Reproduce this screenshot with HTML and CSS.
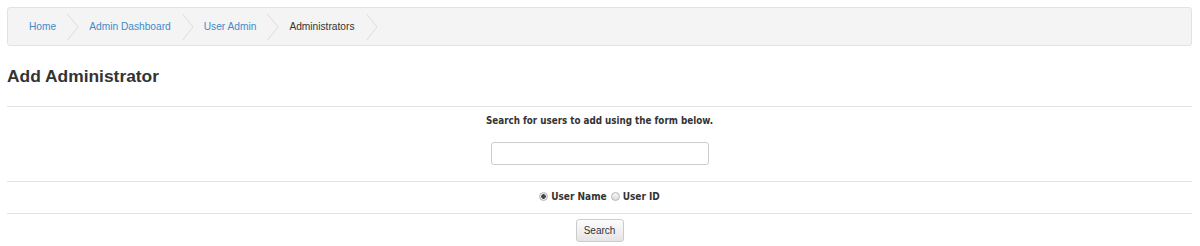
FILE: index.html
```html
<!DOCTYPE html>
<html lang="en">
    <head>
        <meta charset="UTF-8">
        <title>Add Administrator</title>
        <link rel="stylesheet" href="styles.css">
    </head>
    <body>
        <nav class="crumbs">
            <a href="#">Home</a>
            <svg class="sep" width="12" height="26" viewBox="0 0 12 26"><polyline points="0.5,0 11,13 0.5,26" fill="none" stroke="#dcdcdc" stroke-width="1"/></svg>
            <a href="#">Admin Dashboard</a>
            <svg class="sep" width="12" height="26" viewBox="0 0 12 26"><polyline points="0.5,0 11,13 0.5,26" fill="none" stroke="#dcdcdc" stroke-width="1"/></svg>
            <a href="#">User Admin</a>
            <svg class="sep" width="12" height="26" viewBox="0 0 12 26"><polyline points="0.5,0 11,13 0.5,26" fill="none" stroke="#dcdcdc" stroke-width="1"/></svg>
            <span class="current">Administrators</span>
            <svg class="sep" width="12" height="26" viewBox="0 0 12 26"><polyline points="0.5,0 11,13 0.5,26" fill="none" stroke="#dcdcdc" stroke-width="1"/></svg>
        </nav>

        <h1 class="title">Add Administrator</h1>

        <form class="search-form">
            <div class="row intro">
                <p>Search for users to add using the form below.</p>
                <input type="text" class="field">
            </div>
            <div class="row options">
                <label><input type="radio" name="by" checked> User Name</label>
                <label><input type="radio" name="by"> User ID</label>
            </div>
            <div class="row actions">
                <button type="button" class="btn">Search</button>
            </div>
        </form>
    </body>
</html>
```

FILE: styles.css
```css
*{
    box-sizing: border-box;
}

body{
    margin: 7px 8px 0 7px;
    font-family: "Liberation Sans", Arial, sans-serif;
    color: #333;
    background: #fff;
}

a{
    color: #428bca;
    text-decoration: none;
}

.crumbs{
    height: 39px;
    display: flex;
    align-items: center;
    padding-left: 21px;
    background: #f4f4f4;
    border: 1px solid #e2e2e2;
    border-radius: 3px;
    font-size: 10.2px;
}
.crumbs .sep{
    margin: 0 10px 0 11px;
}
.crumbs .current{
    color: #333;
}

.title{
    margin: 0;
    padding: 20px 0 0 0;
    height: 61px;
    font-size: 17.4px;
    font-weight: bold;
    color: #333;
    border-bottom: 1px solid #e3e3e3;
}

.search-form .row{
    text-align: center;
    border-bottom: 1px solid #e3e3e3;
}
.intro{
    padding: 8px 0 16px 0;
}
.intro p{
    margin: 0 0 16px 0;
    font-family: "DejaVu Sans Condensed", "DejaVu Sans", sans-serif;
    font-size: 9.75px;
    font-weight: bold;
    color: #333;
}
.field{
    width: 218px;
    height: 23px;
    border: 1px solid #ccc;
    border-radius: 3px;
    background: #fff;
    display: inline-block;
    vertical-align: top;
}

.options{
    height: 32px;
    padding-bottom: 3px;
    display: flex;
    align-items: center;
    justify-content: center;
    gap: 4px;
    font-family: "DejaVu Sans Condensed", "DejaVu Sans", sans-serif;
    font-size: 10px;
    font-weight: bold;
}
.options label{
    display: flex;
    align-items: center;
    gap: 3px;
}
.options input{
    appearance: none;
    margin: 0;
    width: 9px;
    height: 9px;
    border: 1px solid #b5b5b5;
    border-radius: 50%;
    background: linear-gradient(#f6f6f6, #dcdcdc);
}
.options input:checked{
    background: radial-gradient(circle, #444 0 2px, #e8e8e8 2.5px);
}

.search-form .actions{
    border-bottom: none;
    padding-top: 5px;
}
.btn{
    width: 48px;
    height: 23px;
    font-family: "Liberation Sans", Arial, sans-serif;
    font-size: 10px;
    color: #333;
    border: 1px solid #ccc;
    border-radius: 3px;
    background: linear-gradient(#fdfdfd, #e4e4e4);
    padding: 0;
}
```
